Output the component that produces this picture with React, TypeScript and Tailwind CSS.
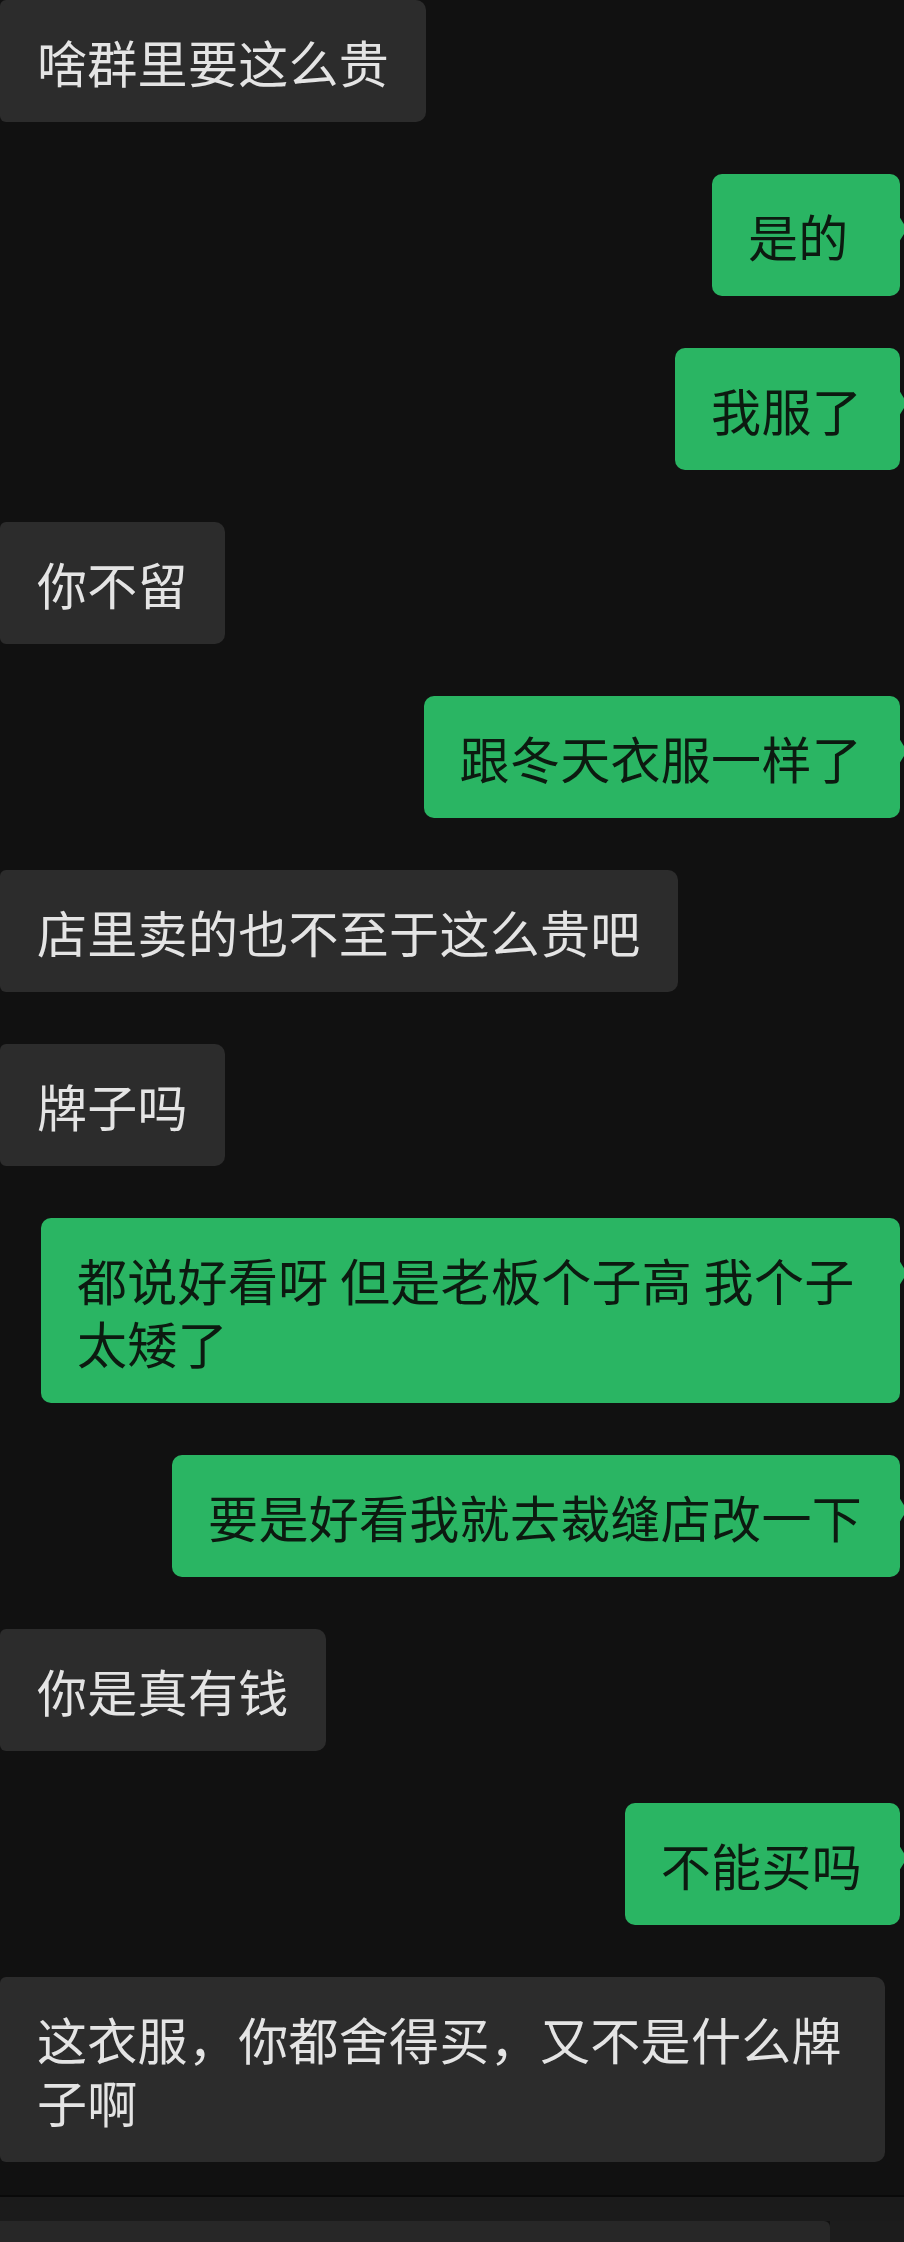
import React from "react";

type Msg = { side: "l" | "r"; text: string; minW?: string };

const msgs: Msg[] = [
  { side: "l", text: "啥群里要这么贵" },
  { side: "r", text: "是的", minW: "min-w-[188px]" },
  { side: "r", text: "我服了" },
  { side: "l", text: "你不留" },
  { side: "r", text: "跟冬天衣服一样了" },
  { side: "l", text: "店里卖的也不至于这么贵吧" },
  { side: "l", text: "牌子吗" },
  { side: "r", text: "都说好看呀 但是老板个子高 我个子太矮了" },
  { side: "r", text: "要是好看我就去裁缝店改一下" },
  { side: "l", text: "你是真有钱" },
  { side: "r", text: "不能买吗" },
  { side: "l", text: "这衣服，你都舍得买，又不是什么牌子啊" },
];

function Left({ text }: { text: string }) {
  return (
    <div className="flex justify-start pr-[19px]">
      <div className="max-w-[885px] rounded-r-[10px] rounded-l-[6px] bg-[#2c2c2c] px-[37px] pt-[30px] pb-[29px] text-[50px] leading-[63px] tracking-[0.3px] text-[#e4e4e4]">
        {text}
      </div>
    </div>
  );
}

function Right({ text, minW }: { text: string; minW?: string }) {
  return (
    <div className="flex justify-end pr-[4px] pl-[41px]">
      <div
        className={`relative max-w-[859px] rounded-[10px] bg-[#2ab563] pl-[36px] pr-[38px] pt-[30px] pb-[29px] text-[50px] leading-[63px] tracking-[0.3px] text-[#0c1a10] ${minW ?? ""}`}
      >
        {text}
        <span className="absolute right-[-7px] top-[42px] h-0 w-0 border-y-[13px] border-l-[8px] border-y-transparent border-l-[#2ab563]" />
      </div>
    </div>
  );
}

export default function App() {
  return (
    <div
      className="flex h-[2242px] w-[904px] flex-col overflow-hidden bg-[#111111]"
      style={{ fontFamily: '"Noto Sans CJK SC", "Noto Sans", sans-serif' }}
    >
      <div className="flex flex-col gap-[52px]">
        {msgs.map((m, i) =>
          m.side === "l" ? (
            <Left key={i} text={m.text} />
          ) : (
            <Right key={i} text={m.text} minW={m.minW} />
          )
        )}
      </div>
      <div className="mt-[33px] flex flex-1 flex-col border-t-2 border-[#0a0a0a]">
        <div className="h-[24px] bg-[#1b1b1b]" />
        <div className="flex flex-1">
          <div className="w-[830px] rounded-tr-[6px] bg-[#272727]" />
          <div className="flex-1 bg-[#1c1c1c]" />
        </div>
      </div>
    </div>
  );
}
